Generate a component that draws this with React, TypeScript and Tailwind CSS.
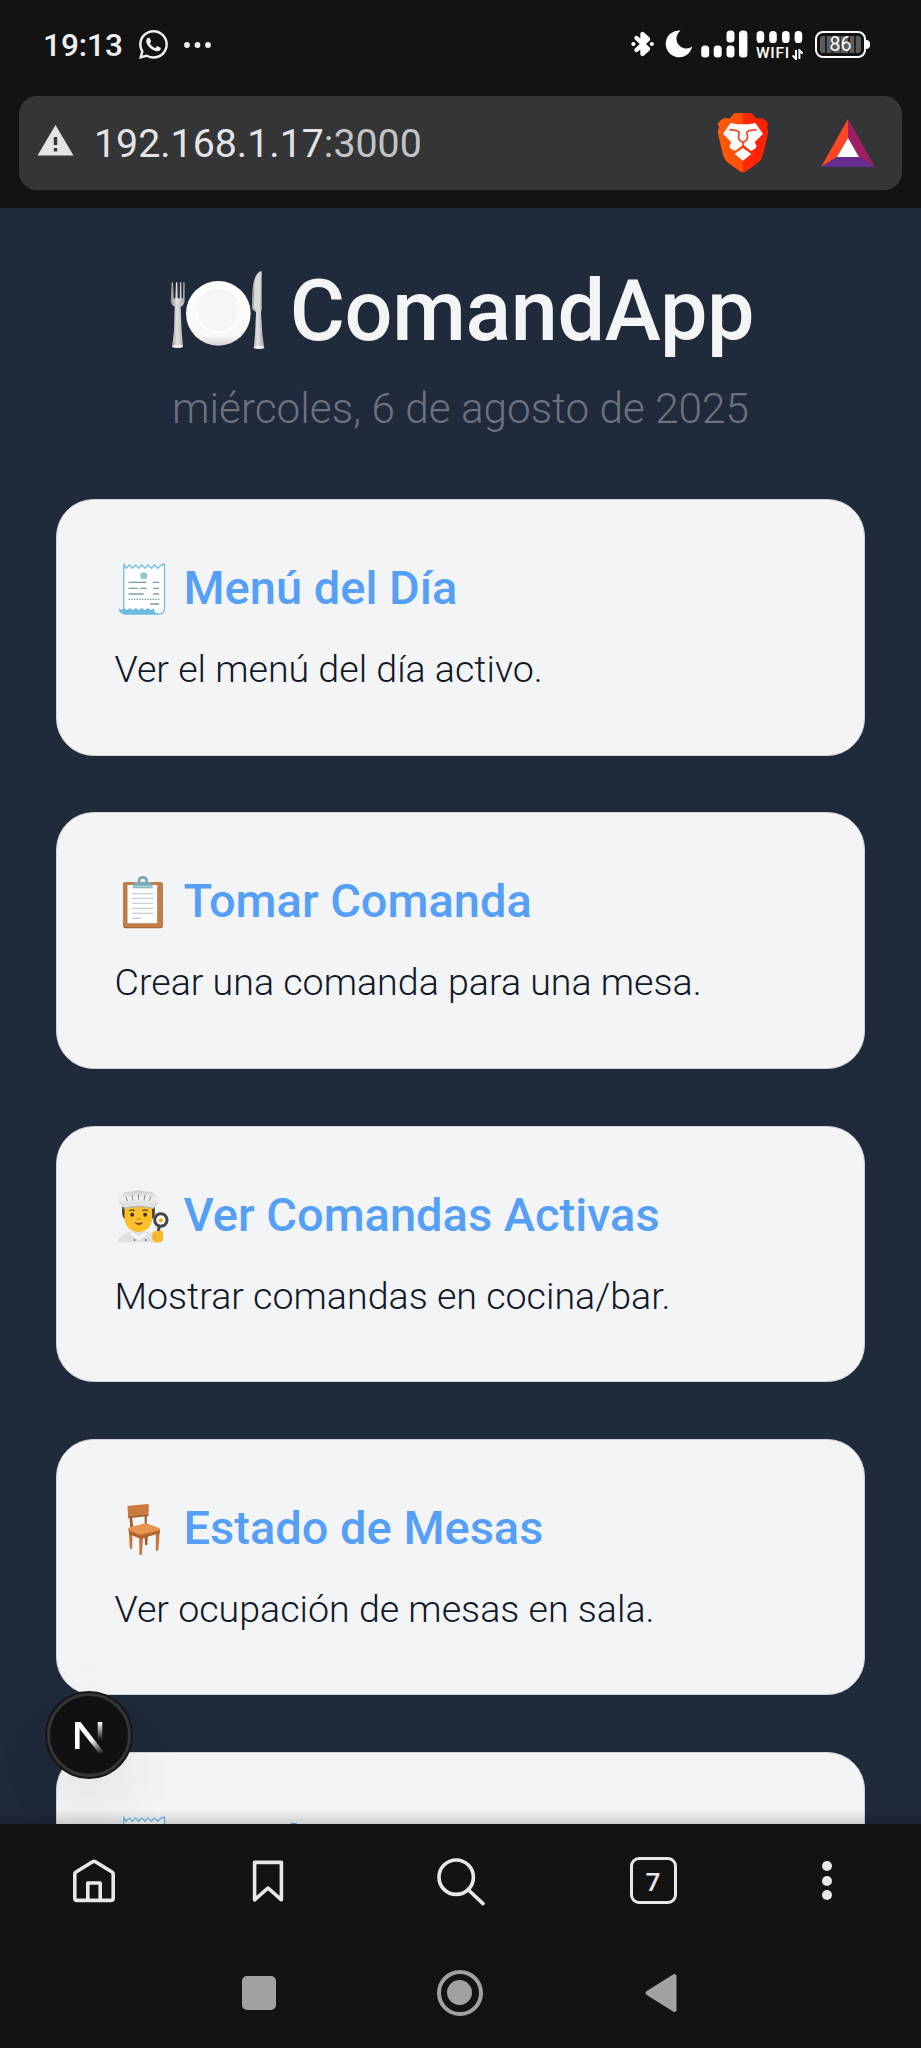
import type { ReactNode } from "react";
import { BsWhatsapp } from "react-icons/bs";

function BluetoothIcon() {
  return (
    <svg className="h-[28px] w-[24px]" viewBox="0 0 24 28" fill="none" stroke="#fff">
      <path d="M5.5 8 L17 18.8 L11.5 24 V4 L17 9.2 L5.5 20" strokeWidth="4.4" strokeLinejoin="round" strokeLinecap="round" />
      <circle cx="2.4" cy="14" r="2.1" fill="#fff" stroke="none" />
      <circle cx="20.8" cy="14" r="2.1" fill="#fff" stroke="none" />
    </svg>
  );
}

function MoonIcon() {
  return (
    <svg className="h-[28px] w-[28px]" viewBox="0 0 28 28" fill="#fff">
      <path d="M15.5 .6 A13.4 13.4 0 1 0 27.2 16.6 A9.6 9.6 0 0 1 15.5 .6Z" />
    </svg>
  );
}

function SignalIcon() {
  return (
    <svg className="h-[28px] w-[47px]" viewBox="0 0 47 28" fill="#fff">
      <rect x="0.2" y="15.5" width="8" height="12" rx="3.5" />
      <rect x="12.7" y="15.5" width="8" height="12" rx="3.5" />
      <rect x="25.5" y="0.5" width="8" height="12" rx="3.5" />
      <rect x="25.5" y="15.5" width="8" height="12" rx="3.5" />
      <rect x="38" y="0.5" width="8.4" height="27" rx="3.5" />
    </svg>
  );
}

function WifiIndicator() {
  return (
    <div className="flex h-[32px] w-[48px] flex-col">
      <svg className="h-[14px] w-[48px]" viewBox="0 0 48 14" fill="#fff">
        <rect x="0.6" y="1" width="7.6" height="12" rx="3.6" />
        <rect x="13.2" y="1" width="7.6" height="12" rx="3.6" />
        <rect x="26" y="1" width="7.6" height="12" rx="3.6" />
        <rect x="38.6" y="1" width="7.6" height="12" rx="3.6" />
      </svg>
      <div className="flex items-center gap-[4px]">
        <span className="w-[32px] text-[15.5px] leading-[18px] font-medium tracking-[0.7px] text-white">WIFI</span>
        <svg className="mt-[3px] h-[11px] w-[11px] shrink-0" viewBox="0 0 11 11" fill="none" stroke="#fff" strokeWidth="2">
          <path d="M4 1 V10 L.6 6.4 M7.4 10 V1.2 L10.6 4.6" />
        </svg>
      </div>
    </div>
  );
}

function Battery() {
  return (
    <div className="flex items-center">
      <div className="flex h-[27px] w-[51px] items-center justify-center rounded-[8px] border-2 border-white p-[3px]">
        <div className="flex h-full w-full items-center justify-center rounded-[3px] bg-[linear-gradient(90deg,#5c5c5c_0_11%,#222_11%_17%,#5c5c5c_17%_27%,#333_27%_33%,#5c5c5c_33%_48%,#333_48%_52%,#5c5c5c_52%_68%,#222_68%_72%,#5c5c5c_72%_84%,#222_84%_88%,#5c5c5c_88%)]">
          <span className="text-[19.5px] leading-[19px] text-white">86</span>
        </div>
      </div>
      <div className="h-[9px] w-[4px] rounded-r-[4px] bg-white" />
    </div>
  );
}

function BraveIcon() {
  return (
    <svg className="h-[62px] w-[52px]" viewBox="348 305 156 186">
      <defs>
        <linearGradient id="brave" x1="0" x2="1" y1="0" y2="0">
          <stop offset="0" stopColor="#ff5a05" />
          <stop offset=".5" stopColor="#ff4d08" />
          <stop offset=".5" stopColor="#ff2a08" />
          <stop offset="1" stopColor="#ff2000" />
        </linearGradient>
      </defs>
      <path
        d="M401 308H451L467 325Q483 319 493 330L502 340L498 351L502 366L486 434Q482 449 470 458L438 481Q426 491 414 481L382 458Q370 449 366 434L350 366L354 351L350 340L359 330Q369 319 385 325Z"
        fill="url(#brave)"
      />
      <path
        d="M389 338L410 342H442L463 338L486 370L461 396L467 407Q464 418 449 421L426 403L403 421Q388 418 385 407L391 396L366 370Z"
        fill="#fff"
      />
      <path d="M426 413L451 431L426 451L401 431Z" fill="#fff" />
      <path
        d="M385 358L408 361L415 366L412 379L415 389L426 397L437 389L440 379L437 366L444 361L467 358M426 397V407"
        fill="none"
        stroke="#f9401a"
        strokeWidth="5"
        strokeLinejoin="round"
      />
    </svg>
  );
}

function BatIcon() {
  return (
    <svg className="h-[49px] w-[54px]" viewBox="0 0 54 49">
      <path d="M27 0V19L16 38L0 48Z" fill="#ff4724" />
      <path d="M27 0L54 48L38 38L27 19Z" fill="#9e1f63" />
      <path d="M0 48L16 38H38L54 48Z" fill="#662d91" />
      <path d="M27 19L38 38H16Z" fill="#fff" />
    </svg>
  );
}

function PlateIcon() {
  return (
    <svg className="h-[82px] w-[97px] shrink-0" viewBox="54 54 291 246">
      <defs>
        <linearGradient id="silver" x1="0" x2="1" y1="0" y2="0">
          <stop offset="0" stopColor="#8f8f8f" />
          <stop offset=".45" stopColor="#e2e2e2" />
          <stop offset="1" stopColor="#a5a5a5" />
        </linearGradient>
        <linearGradient id="rim" x1="0" x2="0" y1="0" y2="1">
          <stop offset="0" stopColor="#ffffff" />
          <stop offset=".85" stopColor="#f7f7f7" />
          <stop offset="1" stopColor="#d2d2d2" />
        </linearGradient>
      </defs>
      <path d="M62 94H66L68 142H73L75 94H79L80 142H86L87 94H91L92 142H96L97 94H101V150Q99 164 89 167L92 240L96 287Q80 294 63 287L69 240L71 167Q61 163 59 151Z" fill="url(#silver)" />
      <path d="M64 284Q80 277 95 284V288Q80 294 64 288Z" fill="#ececec" />
      <path d="M332 60Q315 62 307 96Q302 125 303 175L315 183L312 250L308 291Q324 297 340 291L334 250L330 183L332 176Z" fill="url(#silver)" />
      <path d="M331 62Q317 67 311 98L308 172L325 176Z" fill="#dadada" />
      <path d="M309 287Q324 280 339 287V291Q324 297 309 291Z" fill="#ececec" />
      <circle cx="202" cy="187" r="97" fill="url(#rim)" />
      <circle cx="202" cy="181" r="65" fill="#dedede" />
      <circle cx="202" cy="183" r="65" fill="#fff" />
      <circle cx="202" cy="180" r="61" fill="#f5f5f5" />
    </svg>
  );
}

function ReceiptIcon() {
  return (
    <svg className="h-[54px] w-[54px] shrink-0" viewBox="229.5 214 162 162">
      <path
        d="M253 220L260 233L270 223L279 233L288 223L298 233L307 223L317 233L326 223L336 233L345 223L355 233L365 223L375 220V352Q375 370 358 370H255L253 350Z"
        fill="#fff"
        stroke="#76bfe4"
        strokeWidth="4"
        strokeLinejoin="round"
      />
      <path d="M237 353L246 358L254 352L262 358L271 352L280 358L289 352L298 358L307 352L316 358L325 352L334 358L343 353Q344 368 358 371H255Q239 370 237 353Z" fill="#6fb9e0" />
      <circle cx="313" cy="255" r="10.5" fill="#8fc7d3" />
      <g stroke="#7c9ca6" strokeWidth="4.2">
        <path d="M267 275H321M339 275H359M267 293H295M302 293H321M341 293H359M267 310H312M341 310H359M332 340H359" />
        <path d="M267 326H360" strokeDasharray="4.5 3.5" />
      </g>
    </svg>
  );
}

function ClipboardIcon() {
  return (
    <svg className="h-[54px] w-[54px] shrink-0" viewBox="49.5 43 162 162">
      <rect x="71" y="64" width="119" height="139" rx="7" fill="#a8663a" />
      <rect x="72" y="64" width="116" height="135" rx="6" fill="#c47c46" />
      <path d="M84 73H173V188H84Z" fill="#fff" />
      <path d="M119 66Q116 50 130 50Q144 50 141 66" fill="none" stroke="#7aa3af" strokeWidth="8" />
      <path d="M100 83V72Q102 64 114 63H147Q158 65 159 72V83Z" fill="#7eabb7" />
      <path d="M101 75H158V80H101Z" fill="#a6d3de" />
      <path d="M97 99H162M97 113H162M97 128H162M97 143H162M97 158H162M97 173H125" stroke="#b3c3c9" strokeWidth="3.2" />
    </svg>
  );
}

function ChefIcon() {
  return (
    <svg className="h-[54px] w-[54px] shrink-0" viewBox="49.5 53 162 162">
      <defs>
        <linearGradient id="hat" x1="0" x2="0" y1="0" y2="1">
          <stop offset="0" stopColor="#c9c9c9" />
          <stop offset=".45" stopColor="#f1f1f1" />
          <stop offset="1" stopColor="#cfcfcf" />
        </linearGradient>
      </defs>
      <path d="M55 213Q58 190 82 184L100 178H134L158 186L172 213Z" fill="#dfe0e2" />
      <path d="M98 180L118 194L137 180L145 190L118 208L89 190Z" fill="#f8f8f8" stroke="#cfd2d6" strokeWidth="2" />
      <path d="M68 106H166V128Q163 141 157 144H76Q69 137 68 127Z" fill="#4c3832" />
      <path d="M75 104H158V144Q153 180 117 182Q81 180 75 144Z" fill="#fbbf2d" />
      <path d="M73 107Q62 103 57 94Q51 77 67 70Q76 59 96 61Q118 53 137 61Q160 59 168 70Q185 77 178 94Q174 104 162 110Q118 99 73 111Z" fill="url(#hat)" />
      <path d="M73 102Q118 90 162 102V112Q118 100 73 112Z" fill="#e4e4e4" />
      <path d="M73 109Q118 97 162 109V113Q118 101 73 113Z" fill="#b2b3b5" />
      <path d="M79 77L84 88M98 73L100 86M117 71V84M136 73L134 86M154 77L149 88" stroke="#85878a" strokeWidth="3" strokeLinecap="round" />
      <path d="M89 119Q97 112 105 119M129 119Q137 112 145 119" fill="none" stroke="#59423b" strokeWidth="4" />
      <circle cx="98" cy="130" r="6" fill="#493229" />
      <circle cx="137" cy="130" r="6" fill="#493229" />
      <path d="M112 143H124" stroke="#d99216" strokeWidth="4" strokeLinecap="round" />
      <path d="M105 153Q118 157 130 153Q128 161 117 161Q108 161 105 153Z" fill="#84421e" />
      <path d="M179 165L175 190" stroke="#424549" strokeWidth="9" />
      <circle cx="184" cy="146" r="23" fill="#424549" />
      <circle cx="184" cy="146" r="14" fill="#fff" />
      <circle cx="184" cy="147" r="6.5" fill="#f5b021" />
      <path d="M159 184Q162 178 174 179Q190 175 191 185L190 206Q188 213 175 214Q160 213 158 204Z" fill="#fbb928" />
      <path d="M160 193H171M160 202H170" stroke="#df9415" strokeWidth="2" />
      <circle cx="105" cy="206" r="3" fill="#777" />
      <circle cx="139" cy="206" r="3" fill="#777" />
    </svg>
  );
}

function ChairIcon() {
  return (
    <svg className="h-[54px] w-[54px] shrink-0" viewBox="49.5 33 162 162">
      <path d="M90 78H98L101 108H92ZM135 72H142V106H136Z" fill="#a55f33" />
      <path d="M84 47Q84 44 88 44L144 39Q148 39 148 43L147 72L86 80Z" fill="#c97a3c" />
      <path d="M86 77L147 71V75L86 82Z" fill="#9d592d" />
      <path d="M135 132H145L143 162H137Z" fill="#9d592d" />
      <path d="M88 118H99L98 173H91ZM119 134H131L127 192H120ZM169 120H181L176 179H169Z" fill="#c57535" />
      <path d="M88 117L122 134L181 119V126L123 144L89 129Z" fill="#ad622d" />
      <path d="M87 110L137 97Q141 96 145 98L180 112Q184 116 179 120L128 133Q122 134 117 132L88 119Q84 114 87 110Z" fill="#e6944f" />
      <path d="M86 116L118 130Q124 132 181 117L180 121L126 137L117 135L88 121Z" fill="#bd6c31" />
    </svg>
  );
}

function NextBadge() {
  return (
    <div className="absolute top-[1483px] left-[45px] flex h-[88px] w-[88px] items-center justify-center rounded-full bg-[#151617] shadow-[0_38px_75px_-18px_rgba(0,0,0,0.1),0_18px_75px_rgba(0,0,0,0.05)]">
      <div className="flex h-[84px] w-[84px] items-center justify-center rounded-full border-[3px] border-[#353535] bg-[#101113]">
        <svg className="h-[36px] w-[32px]" viewBox="0 0 32 36" fill="none">
          <defs>
            <linearGradient id="diag" gradientUnits="userSpaceOnUse" x1="20" y1="21" x2="29" y2="34">
              <stop offset="0" stopColor="#fff" />
              <stop offset="1" stopColor="#fff" stopOpacity=".15" />
            </linearGradient>
            <linearGradient id="stem" gradientUnits="userSpaceOnUse" x1="26" y1="5" x2="26" y2="23">
              <stop offset="0" stopColor="#fff" />
              <stop offset="1" stopColor="#fff" stopOpacity="0" />
            </linearGradient>
          </defs>
          <path d="M4.3 32V5" stroke="#fff" strokeWidth="4.6" />
          <path d="M2 5H7.5L30.5 34.5L27 37.5L4 8.5Z" fill="url(#diag)" />
          <path d="M27 5V23.5" stroke="url(#stem)" strokeWidth="4.6" />
        </svg>
      </div>
    </div>
  );
}

interface CardProps {
  icon: ReactNode;
  title: string;
  text: string;
}

const cards: CardProps[] = [
  { icon: <ReceiptIcon />, title: "Menú del Día", text: "Ver el menú del día activo." },
  { icon: <ClipboardIcon />, title: "Tomar Comanda", text: "Crear una comanda para una mesa." },
  { icon: <ChefIcon />, title: "Ver Comandas Activas", text: "Mostrar comandas en cocina/bar." },
  { icon: <ChairIcon />, title: "Estado de Mesas", text: "Ver ocupación de mesas en sala." },
  { icon: <ReceiptIcon />, title: "Menú", text: "" },
];

function Card({ icon, title, text }: CardProps) {
  return (
    <section className="h-[256.6px] shrink-0 rounded-[37.6px] border border-[#d1d5db] bg-[#f3f4f6] px-[57.5px] pt-[56px]">
      <div className="flex items-center gap-[13.5px] pl-[1.5px]">
        {icon}
        <h2 className="pb-[2px] text-[47px] leading-[64px] font-medium whitespace-nowrap text-[#559ff7]">{title}</h2>
      </div>
      <p className="mt-[19px] text-[37.6px] leading-[56px] font-light whitespace-nowrap text-[#111827]">{text}</p>
    </section>
  );
}

function StatusBar() {
  return (
    <div className="flex h-[96px] items-start justify-between pr-[51px] pl-[43px]">
      <div className="flex h-[89px] items-center text-[#f0f0f0]">
        <span className="w-[96px] pt-[3px] text-[31.5px] leading-[38px] font-medium">19:13</span>
        <BsWhatsapp className="h-[29px] w-[29px]" />
        <svg className="ml-[16px] h-[8px] w-[28px]" viewBox="0 0 28 8" fill="currentColor">
          <circle cx="3" cy="4" r="2.9" />
          <circle cx="13.5" cy="4" r="2.9" />
          <circle cx="24" cy="4" r="2.9" />
        </svg>
      </div>
      <div className="flex items-start pt-[30px]">
        <BluetoothIcon />
        <div className="ml-[10px]"><MoonIcon /></div>
        <div className="ml-[8px]"><SignalIcon /></div>
        <div className="ml-[8px]"><WifiIndicator /></div>
        <div className="ml-[11px] pt-px"><Battery /></div>
      </div>
    </div>
  );
}

function AddressBar() {
  return (
    <div className="mx-[19px] flex h-[94px] items-center rounded-[18px] bg-[#343537] pr-[27px] pl-[18px]">
      <svg className="mb-[5px] h-[31px] w-[37px]" viewBox="0 0 37 31">
        <path d="M18.5 0L36.5 30.5H.5Z" fill="#e3e4e6" />
        <path d="M16.8 12H20.2V20H16.8ZM16.8 23H20.2V26.4H16.8Z" fill="#343537" />
      </svg>
      <span className="ml-[20px] flex-1 pt-[2px] text-[39.3px] leading-[46px] text-[#e4e4e6]">
        192.168.1.17<span className="text-[#c3c4c6]">:3000</span>
      </span>
      <BraveIcon />
      <div className="ml-[52px]"><BatIcon /></div>
    </div>
  );
}

function BrowserToolbar() {
  return (
    <div className="flex h-[113px] items-center text-[#e8e8e8]">
      <div className="flex w-[188px] justify-center">
        <svg className="h-[44px] w-[44px]" viewBox="0 0 44 44" fill="none" stroke="currentColor" strokeWidth="3.6" strokeLinejoin="round">
          <path d="M2.8 15.2Q2.8 13.8 4 13L20.6 2.8Q22 2 23.4 2.8L40 13Q41.2 13.8 41.2 15.2V39Q41.2 41.4 38.8 41.4H5.2Q2.8 41.4 2.8 39Z" />
          <path d="M15.8 41V24H28.2V41" />
        </svg>
      </div>
      <div className="flex w-[159px] justify-center">
        <svg className="h-[44px] w-[32px]" viewBox="0 0 32 44" fill="none" stroke="currentColor" strokeWidth="3.6" strokeLinejoin="round">
          <path d="M2.6 3.4H29.4V40.8L16 29L2.6 40.8Z" />
        </svg>
      </div>
      <div className="flex w-[225px] justify-center">
        <svg className="h-[50px] w-[50px]" viewBox="0 0 50 50" fill="none" stroke="currentColor" strokeWidth="3.6" strokeLinecap="round">
          <circle cx="21.2" cy="21.2" r="17.2" />
          <path d="M33.5 34L48 47.6" />
        </svg>
      </div>
      <div className="flex w-[162px] justify-center">
        <div className="flex h-[47px] w-[47px] items-center justify-center rounded-[9px] border-[3.5px] border-current">
          <span className="font-['Open_Sans'] text-[26px] leading-[30px] font-semibold">7</span>
        </div>
      </div>
      <div className="flex w-[186px] flex-col items-center gap-[4.2px]">
        <span className="h-[10px] w-[10px] rounded-full bg-current" />
        <span className="h-[10px] w-[10px] rounded-full bg-current" />
        <span className="h-[10px] w-[10px] rounded-full bg-current" />
      </div>
    </div>
  );
}

function SystemNav() {
  return (
    <div className="flex h-[111px] items-center pr-[160px] pl-[158px]">
      <div className="flex flex-1 justify-center">
        <span className="h-[34px] w-[34px] rounded-[5px] bg-[#a1a1a1]" />
      </div>
      <div className="flex flex-1 justify-center">
        <div className="flex h-[46px] w-[46px] items-center justify-center rounded-full border-4 border-[#a1a1a1]">
          <span className="h-[25px] w-[25px] rounded-full bg-[#a1a1a1]" />
        </div>
      </div>
      <div className="flex flex-1 justify-center">
        <svg className="h-[40px] w-[34px]" viewBox="0 0 34 40">
          <path d="M3.5 20L30.5 3V37Z" fill="#a1a1a1" stroke="#a1a1a1" strokeWidth="4" strokeLinejoin="round" />
        </svg>
      </div>
    </div>
  );
}

export default function App() {
  return (
    <div className="flex h-[2048px] w-[921px] flex-col overflow-hidden bg-[#131313] font-[Roboto,sans-serif]">
      <header className="h-[208px] shrink-0">
        <StatusBar />
        <AddressBar />
      </header>
      <main className="relative flex h-[1616px] shrink-0 flex-col overflow-hidden bg-[#1f2a3a] px-[56px] pt-[57px]">
        <div className="flex h-[94px] shrink-0 items-center justify-center gap-[24px] pl-[2px]">
          <div className="pb-[4px]"><PlateIcon /></div>
          <h1 className="text-[84.6px] leading-[94px] font-medium tracking-[-0.35px] text-[#f3f4f6]">ComandApp</h1>
        </div>
        <p className="mt-[17px] text-center text-[42.3px] leading-[66px] font-light text-[#6b7280]">
          miércoles, 6 de agosto de 2025
        </p>
        <div className="mt-[57px] flex flex-col gap-[56.7px]">
          {cards.map((card, i) => (
            <Card key={i} {...card} />
          ))}
        </div>
        <NextBadge />
        <div className="absolute inset-x-0 bottom-0 h-[14px] bg-linear-to-b from-transparent to-black/15" />
      </main>
      <footer className="h-[224px] shrink-0">
        <BrowserToolbar />
        <SystemNav />
      </footer>
    </div>
  );
}
